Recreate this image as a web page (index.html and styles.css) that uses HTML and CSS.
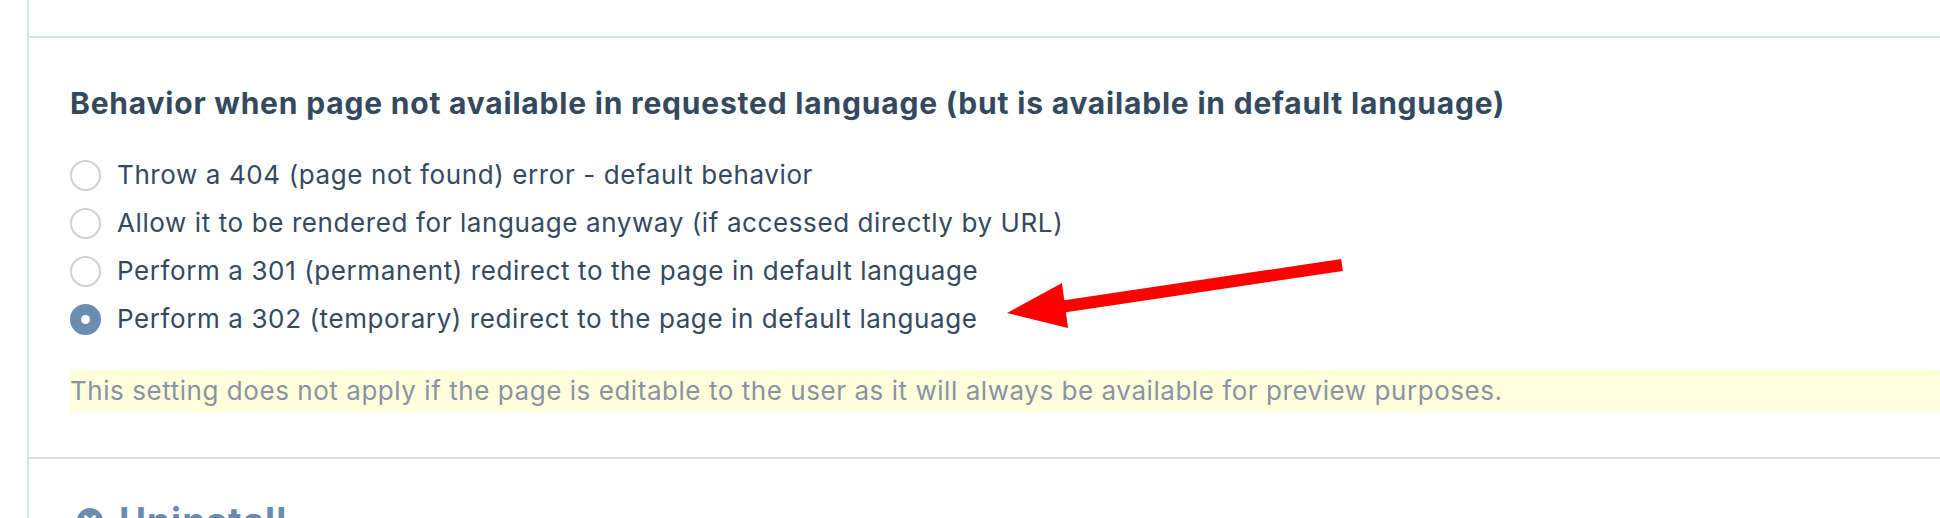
FILE: index.html
```html
<!DOCTYPE html>
<html lang="en">
    <head>
        <meta charset="UTF-8">
        <meta name="viewport" content="width=device-width, initial-scale=1.0">
        <title>Language settings</title>
        <link rel="stylesheet" href="styles.css">
    </head>
    <body>
        <div id="page">
            <div class="panel">
                <div class="panel-top"></div>
                <div class="section">
                    <h2 class="section-title">Behavior when page not available in requested language (but is available in default language)</h2>
                    <ul class="options">
                        <li><span class="radio"></span>Throw a 404 (page not found) error - default behavior</li>
                        <li><span class="radio"></span>Allow it to be rendered for language anyway (if accessed directly by URL)</li>
                        <li><span class="radio"></span>Perform a 301 (permanent) redirect to the page in default language</li>
                        <li><span class="radio checked"></span>Perform a 302 (temporary) redirect to the page in default language</li>
                    </ul>
                    <p class="note">This setting does not apply if the page is editable to the user as it will always be available for preview purposes.</p>
                </div>
                <div class="section-next">
                    <h2 class="next-title">
                        <svg class="next-icon" viewBox="0 0 26 26" width="26" height="26">
                            <circle cx="13" cy="13" r="13" fill="#6b8cae"/>
                            <path d="M8.5 8.5 L17.5 17.5 M17.5 8.5 L8.5 17.5" stroke="#fff" stroke-width="3" stroke-linecap="round"/>
                        </svg>
                        Uninstall
                    </h2>
                </div>
            </div>
            <!-- annotation arrow -->
            <svg class="arrow" width="1940" height="518" viewBox="0 0 1940 518">
                <line x1="1342" y1="265" x2="1060" y2="307" stroke="#ff0000" stroke-width="12"/>
                <polygon points="1007,313 1062,283 1068,328" fill="#ff0000"/>
            </svg>
        </div>
    </body>
</html>
```

FILE: styles.css
```css
body {
    margin: 0;
    font-family: Inter, 'Noto Sans', sans-serif;
    color: #34495e;
    background: #fff;
    overflow: hidden;
}
#page {
    position: relative;
    height: 518px;
    overflow: hidden;
}
.panel {
    margin-left: 27px;
    border-left: 2px solid #d8e0ea;
    min-height: 518px;
}
.panel-top {
    height: 36px;
    border-bottom: 2px solid #d8e0ea;
}
.section {
    padding: 48px 0 45px 41px;
    border-bottom: 2px solid #d8e0ea;
}
.section-title {
    margin: 0;
    font-size: 30px;
    line-height: 34px;
    letter-spacing: 0.8px;
    font-weight: 700;
    color: #34495e;
}
.options {
    list-style: none;
    margin: 31px 0 0 0;
    padding: 0;
}
.options li {
    display: flex;
    align-items: center;
    height: 48px;
    font-size: 26px;
    line-height: 48px;
    letter-spacing: 0.6px;
}
.radio {
    box-sizing: border-box;
    width: 31px;
    height: 31px;
    border: 2px solid #d0d0d0;
    border-radius: 50%;
    margin-right: 16px;
    flex-shrink: 0;
    display: flex;
    align-items: center;
    justify-content: center;
}
.radio.checked {
    background: #6b8cae;
    border-color: #6b8cae;
}
.radio.checked::after {
    content: '';
    width: 9px;
    height: 9px;
    border-radius: 50%;
    background: #fff;
}
.note {
    margin: 27px 0 0 0;
    background: #ffffdc;
    color: #8a93a3;
    font-size: 26px;
    line-height: 42px;
    letter-spacing: 0.55px;
}
.section-next {
    padding: 40px 0 0 48px;
}
.next-title {
    margin: 0;
    display: flex;
    align-items: center;
    gap: 16px;
    font-size: 37px;
    line-height: 44px;
    letter-spacing: 1px;
    font-weight: 700;
    color: #6b8cae;
}
.arrow {
    position: absolute;
    left: 0;
    top: 0;
    pointer-events: none;
}
```
